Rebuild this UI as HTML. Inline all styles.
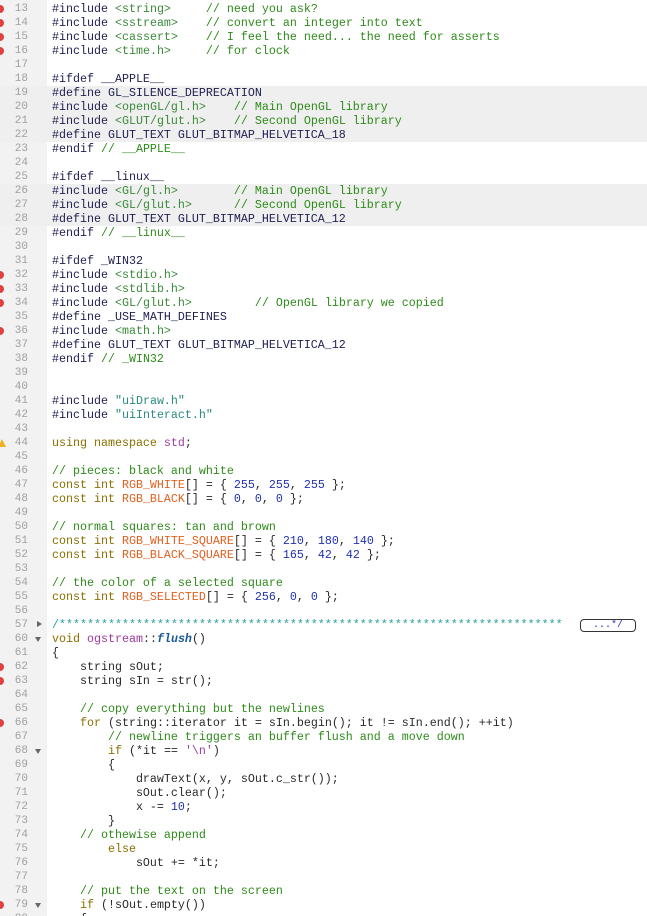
<!DOCTYPE html>
<html><head><meta charset="utf-8"><style>
html,body{margin:0;padding:0;background:#fff;width:647px;height:916px;overflow:hidden;position:relative}
#g{position:absolute;left:0;top:0;width:47px;height:916px;background:#f2f2f2}
.l{position:absolute;left:0;width:647px;height:14px;font:11.67px/14px "Liberation Mono",monospace;white-space:pre;color:#2a2a2a}
.hl{background:#efefef}
.n{position:absolute;left:0;width:28px;text-align:right;color:#a0a0a0;font-size:11px}
.c{position:absolute;left:52px;top:0}
.m{position:absolute;left:-4px;top:3px;width:8px;height:8px;border-radius:50%;background:#e04040}
.w{position:absolute;left:-2px;top:3px;width:0;height:0;border-left:4px solid transparent;border-right:4px solid transparent;border-bottom:8px solid #f0b020}
.fd{position:absolute;left:35px;top:5px;border-left:3.5px solid transparent;border-right:3.5px solid transparent;border-top:5px solid #666}
.fr{position:absolute;left:37px;top:3px;border-top:3.5px solid transparent;border-bottom:3.5px solid transparent;border-left:5px solid #666}
.p{color:#1e1e50}.i{color:#3a8a3a}.cm{color:#2e8b1a}.k{color:#8a7000}.id{color:#e06020}.nu{color:#2030b0}.s{color:#2a8a80}.pu{color:#a03aa0}.fn{color:#1a5a9a;font-weight:bold;font-style:italic}.st{color:#2aa0a0}
.box{position:absolute;left:580px;top:1px;width:54px;height:11px;border:1px solid #333;border-radius:4px;font-size:10px;line-height:11px;text-align:center;color:#2030b0}
</style></head><body>
<div id="g"></div>
<div class="l" style="top:2px"><span class="m"></span><span class="n">13</span><span class="c"><span class="p">#include </span><span class="i">&lt;string&gt;</span>     <span class="cm">// need you ask?</span></span></div>
<div class="l" style="top:16px"><span class="m"></span><span class="n">14</span><span class="c"><span class="p">#include </span><span class="i">&lt;sstream&gt;</span>    <span class="cm">// convert an integer into text</span></span></div>
<div class="l" style="top:30px"><span class="m"></span><span class="n">15</span><span class="c"><span class="p">#include </span><span class="i">&lt;cassert&gt;</span>    <span class="cm">// I feel the need... the need for asserts</span></span></div>
<div class="l" style="top:44px"><span class="m"></span><span class="n">16</span><span class="c"><span class="p">#include </span><span class="i">&lt;time.h&gt;</span>     <span class="cm">// for clock</span></span></div>
<div class="l" style="top:58px"><span class="n">17</span></div>
<div class="l" style="top:72px"><span class="n">18</span><span class="c"><span class="p">#ifdef __APPLE__</span></span></div>
<div class="l hl" style="top:86px"><span class="n">19</span><span class="c"><span class="p">#define GL_SILENCE_DEPRECATION</span></span></div>
<div class="l hl" style="top:100px"><span class="n">20</span><span class="c"><span class="p">#include </span><span class="i">&lt;openGL/gl.h&gt;</span>    <span class="cm">// Main OpenGL library</span></span></div>
<div class="l hl" style="top:114px"><span class="n">21</span><span class="c"><span class="p">#include </span><span class="i">&lt;GLUT/glut.h&gt;</span>    <span class="cm">// Second OpenGL library</span></span></div>
<div class="l hl" style="top:128px"><span class="n">22</span><span class="c"><span class="p">#define GLUT_TEXT GLUT_BITMAP_HELVETICA_18</span></span></div>
<div class="l" style="top:142px"><span class="n">23</span><span class="c"><span class="p">#endif </span><span class="cm">// __APPLE__</span></span></div>
<div class="l" style="top:156px"><span class="n">24</span></div>
<div class="l" style="top:170px"><span class="n">25</span><span class="c"><span class="p">#ifdef __linux__</span></span></div>
<div class="l hl" style="top:184px"><span class="n">26</span><span class="c"><span class="p">#include </span><span class="i">&lt;GL/gl.h&gt;</span>        <span class="cm">// Main OpenGL library</span></span></div>
<div class="l hl" style="top:198px"><span class="n">27</span><span class="c"><span class="p">#include </span><span class="i">&lt;GL/glut.h&gt;</span>      <span class="cm">// Second OpenGL library</span></span></div>
<div class="l hl" style="top:212px"><span class="n">28</span><span class="c"><span class="p">#define GLUT_TEXT GLUT_BITMAP_HELVETICA_12</span></span></div>
<div class="l" style="top:226px"><span class="n">29</span><span class="c"><span class="p">#endif </span><span class="cm">// __linux__</span></span></div>
<div class="l" style="top:240px"><span class="n">30</span></div>
<div class="l" style="top:254px"><span class="n">31</span><span class="c"><span class="p">#ifdef _WIN32</span></span></div>
<div class="l" style="top:268px"><span class="m"></span><span class="n">32</span><span class="c"><span class="p">#include </span><span class="i">&lt;stdio.h&gt;</span></span></div>
<div class="l" style="top:282px"><span class="m"></span><span class="n">33</span><span class="c"><span class="p">#include </span><span class="i">&lt;stdlib.h&gt;</span></span></div>
<div class="l" style="top:296px"><span class="m"></span><span class="n">34</span><span class="c"><span class="p">#include </span><span class="i">&lt;GL/glut.h&gt;</span>         <span class="cm">// OpenGL library we copied</span></span></div>
<div class="l" style="top:310px"><span class="n">35</span><span class="c"><span class="p">#define _USE_MATH_DEFINES</span></span></div>
<div class="l" style="top:324px"><span class="m"></span><span class="n">36</span><span class="c"><span class="p">#include </span><span class="i">&lt;math.h&gt;</span></span></div>
<div class="l" style="top:338px"><span class="n">37</span><span class="c"><span class="p">#define GLUT_TEXT GLUT_BITMAP_HELVETICA_12</span></span></div>
<div class="l" style="top:352px"><span class="n">38</span><span class="c"><span class="p">#endif </span><span class="cm">// _WIN32</span></span></div>
<div class="l" style="top:366px"><span class="n">39</span></div>
<div class="l" style="top:380px"><span class="n">40</span></div>
<div class="l" style="top:394px"><span class="n">41</span><span class="c"><span class="p">#include </span><span class="s">"uiDraw.h"</span></span></div>
<div class="l" style="top:408px"><span class="n">42</span><span class="c"><span class="p">#include </span><span class="s">"uiInteract.h"</span></span></div>
<div class="l" style="top:422px"><span class="n">43</span></div>
<div class="l" style="top:436px"><span class="w"></span><span class="n">44</span><span class="c"><span class="k">using namespace </span><span class="pu">std</span>;</span></div>
<div class="l" style="top:450px"><span class="n">45</span></div>
<div class="l" style="top:464px"><span class="n">46</span><span class="c"><span class="cm">// pieces: black and white</span></span></div>
<div class="l" style="top:478px"><span class="n">47</span><span class="c"><span class="k">const int </span><span class="id">RGB_WHITE</span>[] = { <span class="nu">255</span>, <span class="nu">255</span>, <span class="nu">255</span> };</span></div>
<div class="l" style="top:492px"><span class="n">48</span><span class="c"><span class="k">const int </span><span class="id">RGB_BLACK</span>[] = { <span class="nu">0</span>, <span class="nu">0</span>, <span class="nu">0</span> };</span></div>
<div class="l" style="top:506px"><span class="n">49</span></div>
<div class="l" style="top:520px"><span class="n">50</span><span class="c"><span class="cm">// normal squares: tan and brown</span></span></div>
<div class="l" style="top:534px"><span class="n">51</span><span class="c"><span class="k">const int </span><span class="id">RGB_WHITE_SQUARE</span>[] = { <span class="nu">210</span>, <span class="nu">180</span>, <span class="nu">140</span> };</span></div>
<div class="l" style="top:548px"><span class="n">52</span><span class="c"><span class="k">const int </span><span class="id">RGB_BLACK_SQUARE</span>[] = { <span class="nu">165</span>, <span class="nu">42</span>, <span class="nu">42</span> };</span></div>
<div class="l" style="top:562px"><span class="n">53</span></div>
<div class="l" style="top:576px"><span class="n">54</span><span class="c"><span class="cm">// the color of a selected square</span></span></div>
<div class="l" style="top:590px"><span class="n">55</span><span class="c"><span class="k">const int </span><span class="id">RGB_SELECTED</span>[] = { <span class="nu">256</span>, <span class="nu">0</span>, <span class="nu">0</span> };</span></div>
<div class="l" style="top:604px"><span class="n">56</span></div>
<div class="l" style="top:618px"><span class="fr"></span><span class="n">57</span><span class="c"><span class="st">/************************************************************************</span></span><span class="box">...*/</span></div>
<div class="l" style="top:632px"><span class="fd"></span><span class="n">60</span><span class="c"><span class="k">void </span><span class="pu">ogstream</span>::<span class="fn">flush</span>()</span></div>
<div class="l" style="top:646px"><span class="n">61</span><span class="c">{</span></div>
<div class="l" style="top:660px"><span class="m"></span><span class="n">62</span><span class="c">    string sOut;</span></div>
<div class="l" style="top:674px"><span class="m"></span><span class="n">63</span><span class="c">    string sIn = str();</span></div>
<div class="l" style="top:688px"><span class="n">64</span></div>
<div class="l" style="top:702px"><span class="n">65</span><span class="c">    <span class="cm">// copy everything but the newlines</span></span></div>
<div class="l" style="top:716px"><span class="m"></span><span class="n">66</span><span class="c">    <span class="k">for</span> (string::iterator it = sIn.begin(); it != sIn.end(); ++it)</span></div>
<div class="l" style="top:730px"><span class="n">67</span><span class="c">        <span class="cm">// newline triggers an buffer flush and a move down</span></span></div>
<div class="l" style="top:744px"><span class="fd"></span><span class="n">68</span><span class="c">        <span class="k">if</span> (*it == <span class="pu">'\n'</span>)</span></div>
<div class="l" style="top:758px"><span class="n">69</span><span class="c">        {</span></div>
<div class="l" style="top:772px"><span class="n">70</span><span class="c">            drawText(x, y, sOut.c_str());</span></div>
<div class="l" style="top:786px"><span class="n">71</span><span class="c">            sOut.clear();</span></div>
<div class="l" style="top:800px"><span class="n">72</span><span class="c">            x -= <span class="nu">10</span>;</span></div>
<div class="l" style="top:814px"><span class="n">73</span><span class="c">        }</span></div>
<div class="l" style="top:828px"><span class="n">74</span><span class="c">    <span class="cm">// othewise append</span></span></div>
<div class="l" style="top:842px"><span class="n">75</span><span class="c">        <span class="k">else</span></span></div>
<div class="l" style="top:856px"><span class="n">76</span><span class="c">            sOut += *it;</span></div>
<div class="l" style="top:870px"><span class="n">77</span></div>
<div class="l" style="top:884px"><span class="n">78</span><span class="c">    <span class="cm">// put the text on the screen</span></span></div>
<div class="l" style="top:898px"><span class="m"></span><span class="fd"></span><span class="n">79</span><span class="c">    <span class="k">if</span> (!sOut.empty())</span></div>
<div class="l" style="top:912px"><span class="n">80</span><span class="c">    {</span></div>
</body></html>
